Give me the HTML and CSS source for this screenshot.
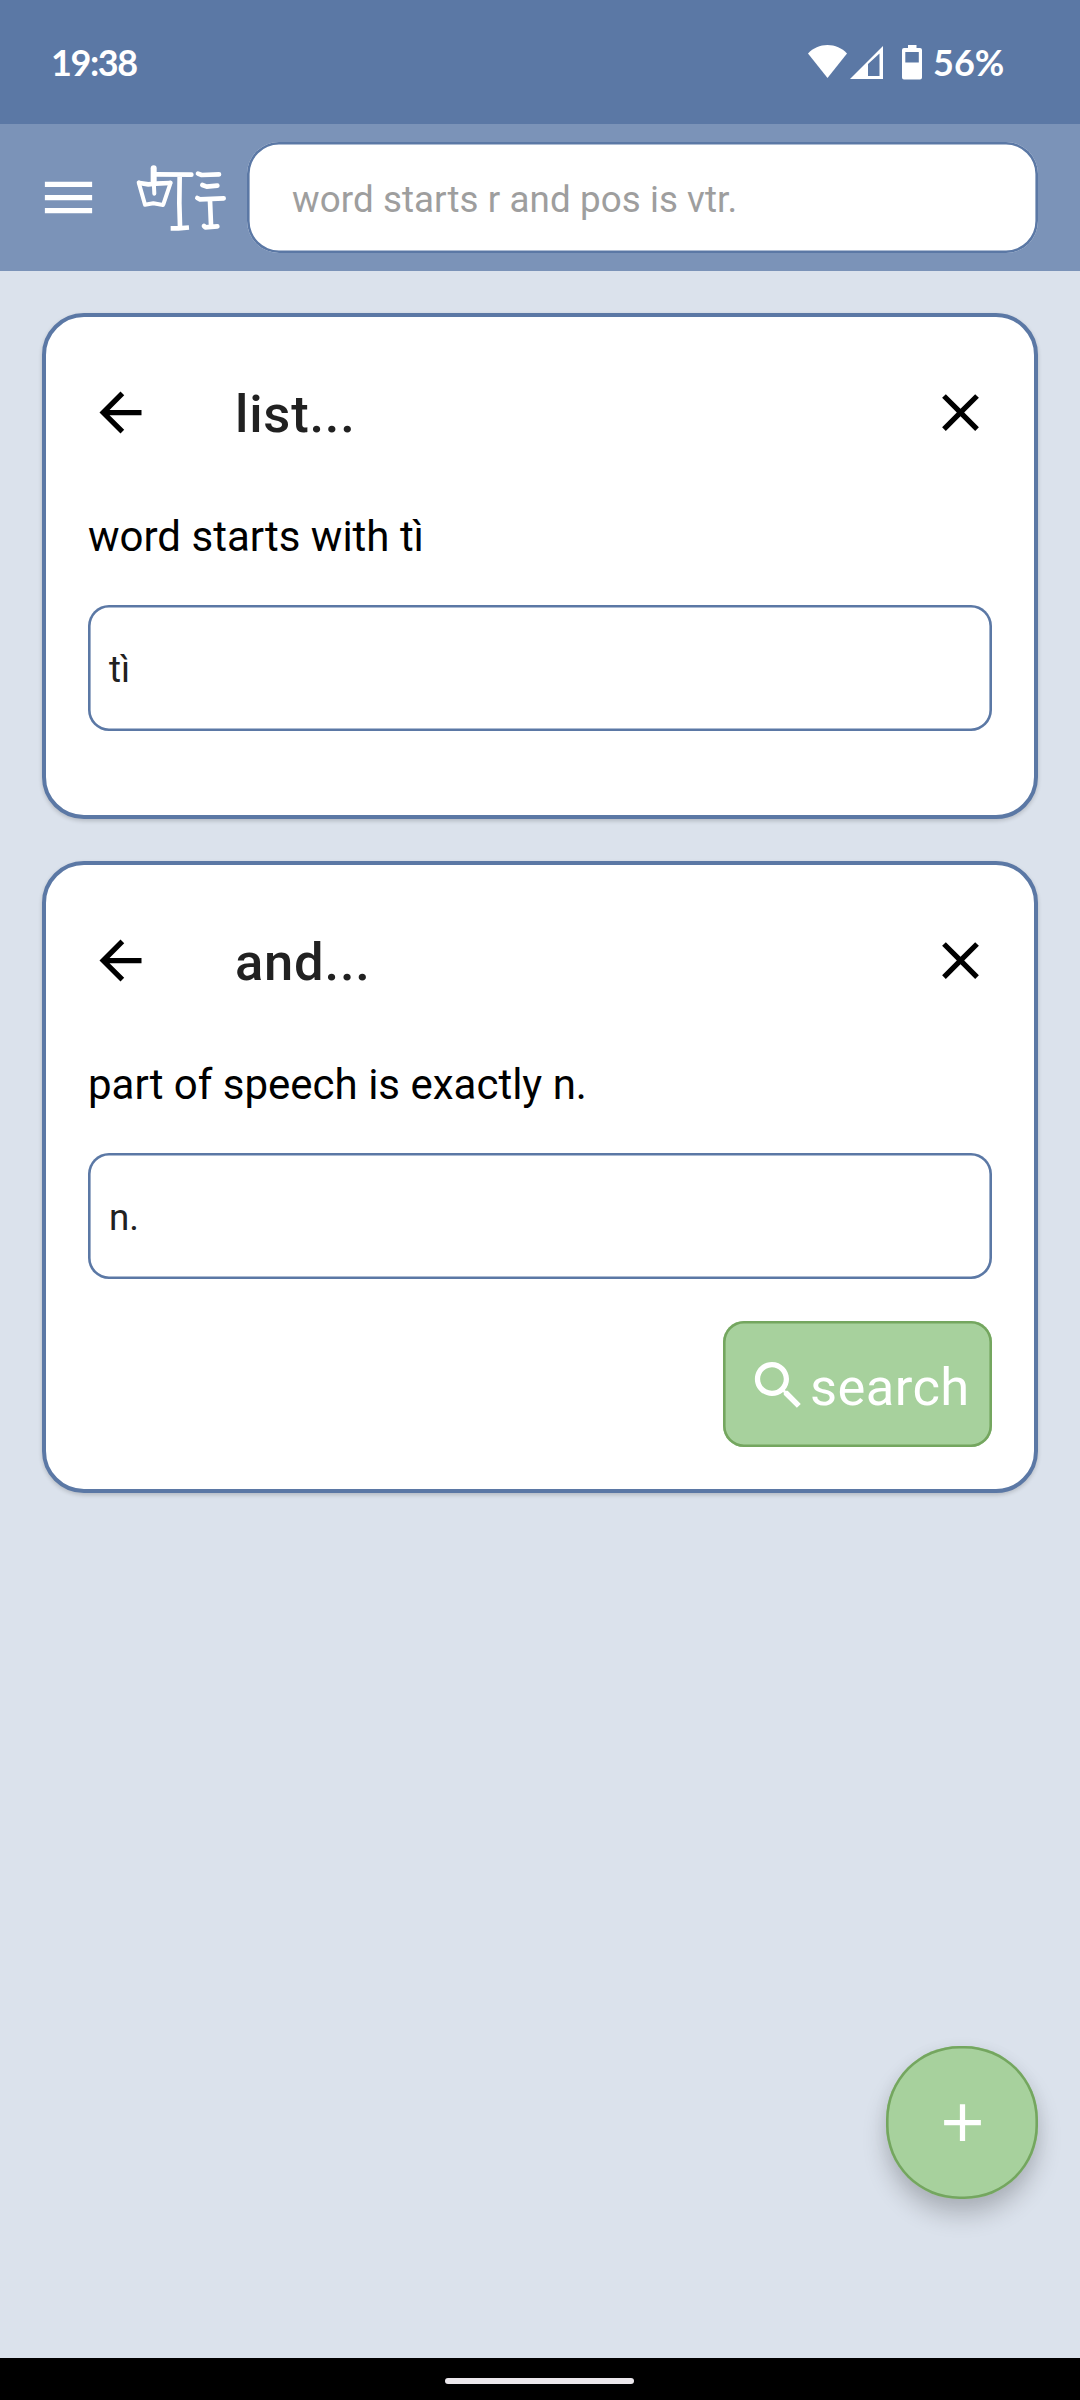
FILE: index.html
```html
<!DOCTYPE html>
<html lang="en">
<head>
<meta charset="utf-8">
<title>Dictionary list</title>
<link rel="stylesheet" href="styles.css">
</head>
<body>
<div class="screen">
  <div class="status">
    <span class="clock">19:38</span>
    <svg class="status-icons" viewBox="0 0 114 36" width="114" height="36">
      <path fill="#fff" d="M0 9.5C5 4 12 1 19.500 1S34 4 39 9.500L19.500 34z"/>
      <path fill="#fff" fill-rule="evenodd" d="M42 35L75 2V35zM60 20V32H71.500V9.500z"/>
      <path fill="#fff" fill-rule="evenodd" d="M100 1h8.500v3H112q2 0 2 2v27.500q0 2-2 2H96q-2 0-2-2V6q0-2 2-2h4zM97.300 8v10.500h13.500V8z"/>
    </svg>
    <span class="percent">56%</span>
  </div>
  <header class="appbar">
    <svg class="icon" viewBox="0 0 24 24"><path fill="#fff" d="M3 18h18v-2H3v2zm0-5h18v-2H3v2zm0-7v2h18V6H3z"/></svg>
    <svg class="logo" viewBox="0 0 360 270" fill="none" stroke="#fff" stroke-linecap="round" stroke-linejoin="round">
      <path stroke-width="18" d="M101 55L101 92"/>
      <path stroke-width="12" d="M101 90L103 131"/>
      <path stroke-width="14" d="M108 73L214 74M179 80L178 160L180 228"/>
      <path stroke-width="14" stroke-linecap="square" d="M159 235L175 235L200 233"/>
      <path stroke-width="12" d="M56 97L75 164M152 98L130 163M75 164L100 160L129 165"/>
      <path stroke-width="14" d="M59 99L85 103L108 101L150 99"/>
      <path stroke-width="14" d="M234 71L245 75L297 73M247 105L260 110L292 107"/>
      <path stroke-width="14" d="M232 144L240 148L311 145M270 152L273 225M252 228L256 232L292 229"/>
    </svg>
    <div class="query">word starts r and pos is vtr.</div>
  </header>
  <main class="content">
    <section class="card">
      <div class="card-head">
        <svg class="icon" viewBox="0 0 24 24"><path d="M20 11H7.830l5.590-5.590L12 4l-8 8 8 8 1.410-1.410L7.830 13H20v-2z"/></svg>
        <h2 class="title">list...</h2>
        <svg class="icon" viewBox="0 0 24 24"><path d="M19 6.410L17.590 5 12 10.590 6.410 5 5 6.410 10.590 12 5 17.590 6.410 19 12 13.410 17.590 19 19 17.590 13.410 12z"/></svg>
      </div>
      <p class="label">word starts with tì</p>
      <div class="field">tì</div>
      <div class="actions"></div>
    </section>
    <section class="card">
      <div class="card-head">
        <svg class="icon" viewBox="0 0 24 24"><path d="M20 11H7.830l5.590-5.590L12 4l-8 8 8 8 1.410-1.410L7.830 13H20v-2z"/></svg>
        <h2 class="title">and...</h2>
        <svg class="icon" viewBox="0 0 24 24"><path d="M19 6.410L17.590 5 12 10.590 6.410 5 5 6.410 10.590 12 5 17.590 6.410 19 12 13.410 17.590 19 19 17.590 13.410 12z"/></svg>
      </div>
      <p class="label">part of speech is exactly n.</p>
      <div class="field">n.</div>
      <div class="actions">
        <div class="search">
          <svg class="icon" viewBox="0 0 24 24"><path fill="#fff" d="M15.500 14h-.79l-.28-.27C15.410 12.590 16 11.110 16 9.500 16 5.910 13.090 3 9.500 3S3 5.910 3 9.500 5.910 16 9.500 16c1.610 0 3.090-.59 4.230-1.570l.27.28v.79l5 4.990L20.490 19l-4.990-5zm-6 0C7.010 14 5 11.990 5 9.500S7.010 5 9.500 5 14 7.010 14 9.500 11.990 14 9.500 14z"/></svg>
          <span class="search-text">search</span>
        </div>
      </div>
    </section>
    <div class="fab">
      <svg class="icon" viewBox="0 0 24 24"><path fill="#fff" d="M19 13h-6v6h-2v-6H5v-2h6V5h2v6h6v2z"/></svg>
    </div>
  </main>
  <div class="navbar"><div class="pill"></div></div>
</div>
</body>
</html>
```
FILE: styles.css
```css
* {
  box-sizing: border-box;
}

body {
  margin: 0;
  font-family: Roboto, sans-serif;
}

.screen {
  width: 1080px;
  height: 2400px;
  display: flex;
  flex-direction: column;
  background: #dbe2ec;
}

.status {
  height: 124px;
  padding: 0 75px 0 51px;
  display: flex;
  align-items: center;
  background: #5b78a5;
  color: #fff;
  font-family: Lato, sans-serif;
  font-size: 36px;
  font-weight: 700;
  line-height: 44px;
}

.clock {
  flex: 1;
  letter-spacing: -1.4px;
}

.status-icons {
  display: block;
  margin-right: 11px;
}

.percent {
  width: 72px;
  white-space: nowrap;
}

.icon {
  display: block;
  flex: none;
  width: 63px;
  height: 63px;
}

.appbar {
  height: 147px;
  padding: 0 42px 0 37px;
  display: flex;
  align-items: center;
  background: #7b93b8;
}

.logo {
  display: block;
  flex: none;
  width: 120px;
  height: 90px;
  margin: 0 7px 5px 20px;
}

.query {
  flex: 1;
  height: 111px;
  padding: 4px 0 0 45px;
  border-radius: 32px;
  background: #fff;
  box-shadow: inset 0 0 0 2.6px #5b78a5;
  color: #9e9e9e;
  font-size: 36.75px;
  line-height: 107px;
  letter-spacing: 0.07px;
}

.content {
  flex: 1;
  padding: 42px;
  display: flex;
  flex-direction: column;
  gap: 42px;
}

.card {
  padding: 42px;
  border: 4px solid #5b78a5;
  border-radius: 42px;
  background: #fff;
  box-shadow: 0 2px 4px rgba(0, 0, 0, 0.18);
}

.card-head {
  height: 107px;
  padding-left: 1px;
  display: flex;
  align-items: center;
}

.title {
  flex: 1;
  margin: 0;
  padding: 2px 0 0 83px;
  color: #212121;
  font-size: 52.5px;
  font-weight: 500;
  line-height: 62px;
  letter-spacing: 0.8px;
}

.label {
  margin: 43px 0 40px;
  color: #000;
  font-size: 42px;
  line-height: 56px;
}

.field {
  height: 126px;
  padding: 3px 0 0 21px;
  border-radius: 21px;
  box-shadow: inset 0 0 0 2.6px #5b78a5;
  color: #212121;
  font-size: 36.75px;
  line-height: 124px;
  letter-spacing: 0.07px;
}

.actions {
  margin-top: 42px;
  display: flex;
  justify-content: flex-end;
}

.search {
  width: 269px;
  height: 126px;
  padding: 2px 0 0 24px;
  display: flex;
  align-items: center;
  border-radius: 21px;
  background: #a7d19d;
  box-shadow: inset 0 0 0 2.6px #74a65f;
  color: #fff;
}

.search-text {
  padding-top: 3px;
  font-size: 52.5px;
  line-height: 62px;
  letter-spacing: 0.4px;
}

.fab {
  width: 152px;
  height: 153px;
  margin: auto 0 117px auto;
  display: flex;
  align-items: center;
  justify-content: center;
  border-radius: 73.5px;
  background: #a7d19d;
  box-shadow: inset 0 0 0 2.6px #74a65f, 0 16px 24px rgba(0, 0, 0, 0.2), 0 2px 16px rgba(0, 0, 0, 0.05);
}

.navbar {
  height: 42px;
  display: flex;
  align-items: center;
  justify-content: center;
  background: #000;
}

.pill {
  width: 189px;
  height: 6px;
  margin: 4px 1px 0 0;
  border-radius: 3px;
  background: #ebe7ec;
}
```
